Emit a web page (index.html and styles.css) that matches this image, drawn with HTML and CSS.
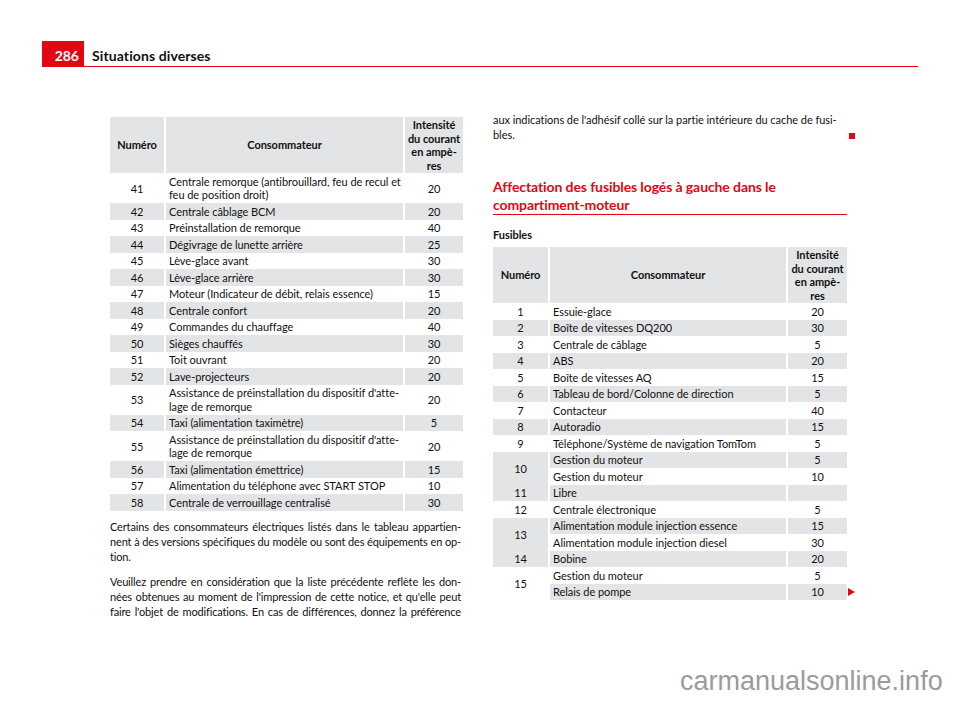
FILE: index.html
```html
<!DOCTYPE html>
<html lang="fr">
<head>
<meta charset="utf-8">
<title>Situations diverses</title>
<link rel="stylesheet" href="styles.css">
</head>
<body>
<div class="page">
  <header class="page-head">
    <div class="page-num">286</div>
    <div class="page-title">Situations diverses</div>
  </header>

  <main class="columns">
    <section class="col col-left">
      <div class="ftable ftable-l">
        <div class="h">Numéro</div><div class="h">Consommateur</div><div class="h"><span>Intensité<br>du courant<br>en ampè-<br>res</span></div>

        <div class="n">41</div><div class="c"><span>Centrale remorque (antibrouillard, feu de recul et<br>feu de position droit)</span></div><div class="a">20</div>
        <div class="n g">42</div><div class="c g">Centrale câblage BCM</div><div class="a g">20</div>
        <div class="n">43</div><div class="c">Préinstallation de remorque</div><div class="a">40</div>
        <div class="n g">44</div><div class="c g">Dégivrage de lunette arrière</div><div class="a g">25</div>
        <div class="n">45</div><div class="c">Lève-glace avant</div><div class="a">30</div>
        <div class="n g">46</div><div class="c g">Lève-glace arrière</div><div class="a g">30</div>
        <div class="n">47</div><div class="c">Moteur (Indicateur de débit, relais essence)</div><div class="a">15</div>
        <div class="n g">48</div><div class="c g">Centrale confort</div><div class="a g">20</div>
        <div class="n">49</div><div class="c">Commandes du chauffage</div><div class="a">40</div>
        <div class="n g">50</div><div class="c g">Sièges chauffés</div><div class="a g">30</div>
        <div class="n">51</div><div class="c">Toit ouvrant</div><div class="a">20</div>
        <div class="n g">52</div><div class="c g">Lave-projecteurs</div><div class="a g">20</div>
        <div class="n">53</div><div class="c"><span>Assistance de préinstallation du dispositif d'atte-<br>lage de remorque</span></div><div class="a">20</div>
        <div class="n g">54</div><div class="c g">Taxi (alimentation taximètre)</div><div class="a g">5</div>
        <div class="n">55</div><div class="c"><span>Assistance de préinstallation du dispositif d'atte-<br>lage de remorque</span></div><div class="a">20</div>
        <div class="n g">56</div><div class="c g">Taxi (alimentation émettrice)</div><div class="a g">15</div>
        <div class="n">57</div><div class="c">Alimentation du téléphone avec START STOP</div><div class="a">10</div>
        <div class="n g">58</div><div class="c g">Centrale de verrouillage centralisé</div><div class="a g">30</div>
      </div>

      <p class="text first">
        <span class="jl">Certains des consommateurs électriques listés dans le tableau appartien-</span>
        <span class="jl">nent à des versions spécifiques du modèle ou sont des équipements en op-</span>
        <span>tion.</span>
      </p>
      <p class="text">
        <span class="jl">Veuillez prendre en considération que la liste précédente reflète les don-</span>
        <span class="jl">nées obtenues au moment de l'impression de cette notice, et qu'elle peut</span>
        <span class="jl">faire l'objet de modifications. En cas de différences, donnez la préférence</span>
      </p>
    </section>

    <section class="col col-right">
      <p class="text with-end">
        <span>aux indications de l'adhésif collé sur la partie intérieure du cache de fusi-</span>
        <span>bles.</span>
        <span class="end-mark"></span>
      </p>

      <h2 class="section-title">Affectation des fusibles logés à gauche dans le<br>compartiment-moteur</h2>

      <h3 class="sub-title">Fusibles</h3>

      <div class="table-wrap">
        <div class="ftable ftable-r">
          <div class="h">Numéro</div><div class="h">Consommateur</div><div class="h"><span>Intensité<br>du courant<br>en ampè-<br>res</span></div>

          <div class="n">1</div><div class="c">Essuie-glace</div><div class="a">20</div>
          <div class="n g">2</div><div class="c g">Boîte de vitesses DQ200</div><div class="a g">30</div>
          <div class="n">3</div><div class="c">Centrale de câblage</div><div class="a">5</div>
          <div class="n g">4</div><div class="c g">ABS</div><div class="a g">20</div>
          <div class="n">5</div><div class="c">Boîte de vitesses AQ</div><div class="a">15</div>
          <div class="n g">6</div><div class="c g">Tableau de bord/Colonne de direction</div><div class="a g">5</div>
          <div class="n">7</div><div class="c">Contacteur</div><div class="a">40</div>
          <div class="n g">8</div><div class="c g">Autoradio</div><div class="a g">15</div>
          <div class="n">9</div><div class="c">Téléphone/Système de navigation TomTom</div><div class="a">5</div>
          <div class="n g span2">10</div><div class="c g">Gestion du moteur</div><div class="a g">5</div>
          <div class="c">Gestion du moteur</div><div class="a">10</div>
          <div class="n g">11</div><div class="c g">Libre</div><div class="a g"></div>
          <div class="n">12</div><div class="c">Centrale électronique</div><div class="a">5</div>
          <div class="n g span2">13</div><div class="c g">Alimentation module injection essence</div><div class="a g">15</div>
          <div class="c">Alimentation module injection diesel</div><div class="a">30</div>
          <div class="n g">14</div><div class="c g">Bobine</div><div class="a g">20</div>
          <div class="n span2">15</div><div class="c">Gestion du moteur</div><div class="a">5</div>
          <div class="c g">Relais de pompe</div><div class="a g">10</div>
        </div>
        <span class="next-mark"></span>
      </div>
    </section>
  </main>

  <div class="watermark">carmanualsonline.info</div>
</div>
</body>
</html>
```

FILE: styles.css
```css
* { box-sizing: border-box; }

html, body {
  margin: 0;
  padding: 0;
  background: #ffffff;
}

body {
  font-family: Lato, "Noto Sans", sans-serif;
  font-variant-ligatures: none;
  font-feature-settings: "liga" 0;
  color: #111111;
  font-size: 11px;
  letter-spacing: -0.05px;
}

.page {
  position: relative;
  width: 960px;
  height: 701px;
  overflow: hidden;
}

/* ---------- page header ---------- */
.page-head {
  display: flex;
  margin: 41px 42px 0 42px;
  height: 26px;
}

.page-num {
  width: 42px;
  background: #e30613;
  color: #ffffff;
  font-weight: 700;
  font-size: 14px;
  letter-spacing: 0;
  text-align: right;
  padding: 6px 5px 0 0;
}

.page-title {
  flex: 1;
  border-bottom: 1px solid #e30613;
  padding: 6px 0 0 8px;
  font-weight: 700;
  font-size: 14px;
  letter-spacing: 0.1px;
  color: #111111;
}

/* ---------- columns ---------- */
.columns {
  display: grid;
  grid-template-columns: 353px 354px;
  column-gap: 30px;
  margin: 45px 0 0 110px;
  align-items: start;
}

.col-left { padding-top: 5px; }

/* ---------- fuse tables (grid) ---------- */
.ftable {
  display: grid;
  column-gap: 2px;
  font-size: 11px;
}

.ftable-l { grid-template-columns: 54px 1fr 58px; }
.ftable-r { grid-template-columns: 55px 1fr 59px; }

.ftable > div {
  display: flex;
  align-items: center;
  line-height: 13.5px;
  padding: 1.5px 0;
  white-space: nowrap;
}

.ftable .h {
  background: #e3e4e5;
  font-weight: 700;
  justify-content: center;
  text-align: center;
  line-height: 13.6px;
  padding: 1px 0;
}

.ftable .n,
.ftable .a { justify-content: center; }

.ftable .c { padding-left: 3px; }

.ftable .g { background: #e3e4e5; }

.ftable .span2 { grid-row: span 2; }

/* ---------- text ---------- */
.text {
  margin: 0;
  line-height: 15px;
  font-size: 11px;
}

.col-left .text { width: 351px; letter-spacing: -0.15px; }

.text span { display: block; white-space: nowrap; }
.text .jl { text-align: justify; text-align-last: justify; }

.text.first { margin-top: 8px; }
.text + .text { margin-top: 10px; }

.with-end { position: relative; }

.end-mark {
  position: absolute;
  right: -8px;
  top: 21px;
  width: 6px;
  height: 6px;
  background: #e30613;
}

.section-title {
  margin: 36px 0 0 0;
  color: #e30613;
  font-size: 14px;
  font-weight: 700;
  line-height: 18px;
  letter-spacing: -0.1px;
  border-bottom: 1.5px solid #e30613;
}

.sub-title {
  margin: 12px 0 0 0;
  font-size: 11px;
  font-weight: 700;
  line-height: 15px;
}

.table-wrap {
  position: relative;
  margin-top: 5px;
}

.next-mark {
  position: absolute;
  right: -8px;
  bottom: 4px;
  width: 0;
  height: 0;
  border-top: 4px solid transparent;
  border-bottom: 4px solid transparent;
  border-left: 7px solid #e30613;
}

/* ---------- watermark ---------- */
.watermark {
  position: absolute;
  left: 680px;
  top: 666px;
  font-family: "Liberation Sans", Arial, sans-serif;
  font-size: 27px;
  letter-spacing: 0;
  color: #9b9b9b;
  white-space: nowrap;
}
```
